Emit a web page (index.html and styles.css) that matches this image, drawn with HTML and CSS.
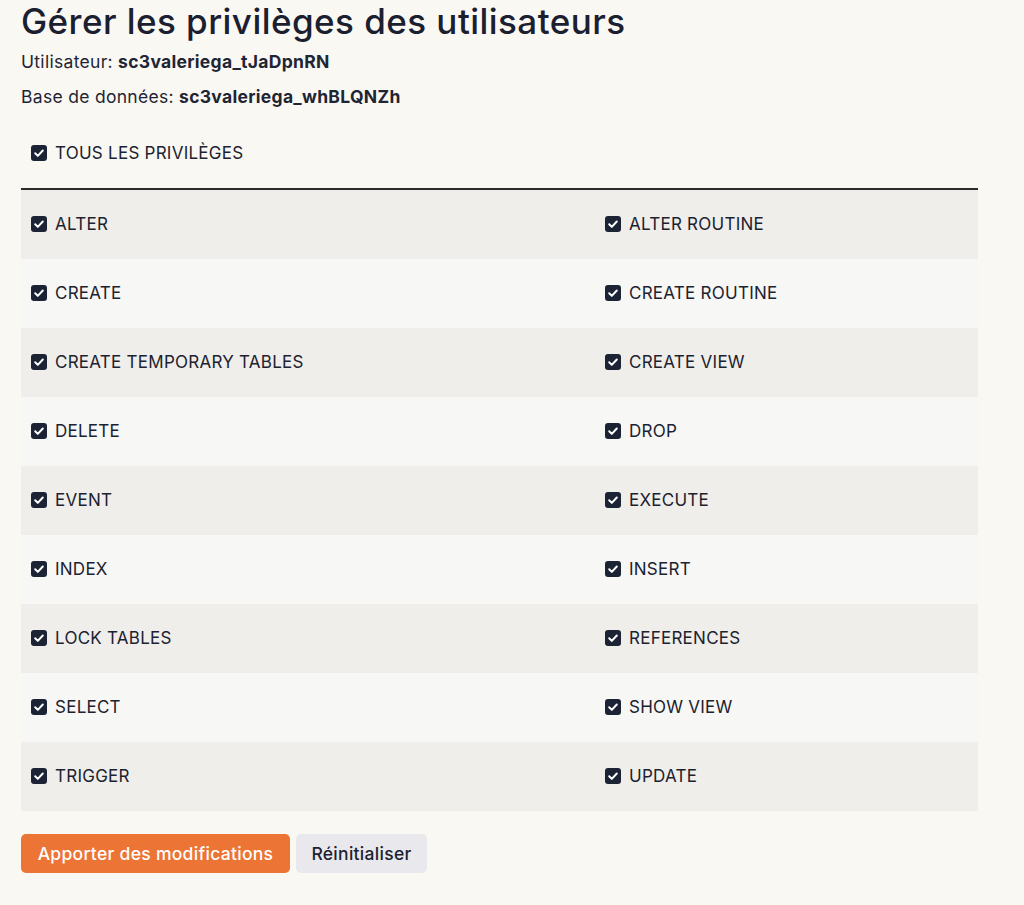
FILE: index.html
```html
<!DOCTYPE html>
<html lang="fr">
<head>
<meta charset="utf-8">
<title>Gérer les privilèges des utilisateurs</title>
<link rel="stylesheet" href="styles.css">
</head>
<body>
<main class="page">
  <h1 class="title">Gérer les privilèges des utilisateurs</h1>
  <p class="meta">Utilisateur: <strong>sc3valeriega_tJaDpnRN</strong></p>
  <p class="meta">Base de données: <strong>sc3valeriega_whBLQNZh</strong></p>

  <div class="all">
    <label class="check"><span class="box"><svg viewBox="0 0 16 16"><path d="M4.2 8.3l2.6 2.6 5-5.4"/></svg></span>TOUS LES PRIVILÈGES</label>
  </div>

  <div class="grid">
    <div class="row">
      <label class="cell check"><span class="box"><svg viewBox="0 0 16 16"><path d="M4.2 8.3l2.6 2.6 5-5.4"/></svg></span>ALTER</label>
      <label class="cell check"><span class="box"><svg viewBox="0 0 16 16"><path d="M4.2 8.3l2.6 2.6 5-5.4"/></svg></span>ALTER ROUTINE</label>
    </div>
    <div class="row">
      <label class="cell check"><span class="box"><svg viewBox="0 0 16 16"><path d="M4.2 8.3l2.6 2.6 5-5.4"/></svg></span>CREATE</label>
      <label class="cell check"><span class="box"><svg viewBox="0 0 16 16"><path d="M4.2 8.3l2.6 2.6 5-5.4"/></svg></span>CREATE ROUTINE</label>
    </div>
    <div class="row">
      <label class="cell check"><span class="box"><svg viewBox="0 0 16 16"><path d="M4.2 8.3l2.6 2.6 5-5.4"/></svg></span>CREATE TEMPORARY TABLES</label>
      <label class="cell check"><span class="box"><svg viewBox="0 0 16 16"><path d="M4.2 8.3l2.6 2.6 5-5.4"/></svg></span>CREATE VIEW</label>
    </div>
    <div class="row">
      <label class="cell check"><span class="box"><svg viewBox="0 0 16 16"><path d="M4.2 8.3l2.6 2.6 5-5.4"/></svg></span>DELETE</label>
      <label class="cell check"><span class="box"><svg viewBox="0 0 16 16"><path d="M4.2 8.3l2.6 2.6 5-5.4"/></svg></span>DROP</label>
    </div>
    <div class="row">
      <label class="cell check"><span class="box"><svg viewBox="0 0 16 16"><path d="M4.2 8.3l2.6 2.6 5-5.4"/></svg></span>EVENT</label>
      <label class="cell check"><span class="box"><svg viewBox="0 0 16 16"><path d="M4.2 8.3l2.6 2.6 5-5.4"/></svg></span>EXECUTE</label>
    </div>
    <div class="row">
      <label class="cell check"><span class="box"><svg viewBox="0 0 16 16"><path d="M4.2 8.3l2.6 2.6 5-5.4"/></svg></span>INDEX</label>
      <label class="cell check"><span class="box"><svg viewBox="0 0 16 16"><path d="M4.2 8.3l2.6 2.6 5-5.4"/></svg></span>INSERT</label>
    </div>
    <div class="row">
      <label class="cell check"><span class="box"><svg viewBox="0 0 16 16"><path d="M4.2 8.3l2.6 2.6 5-5.4"/></svg></span>LOCK TABLES</label>
      <label class="cell check"><span class="box"><svg viewBox="0 0 16 16"><path d="M4.2 8.3l2.6 2.6 5-5.4"/></svg></span>REFERENCES</label>
    </div>
    <div class="row">
      <label class="cell check"><span class="box"><svg viewBox="0 0 16 16"><path d="M4.2 8.3l2.6 2.6 5-5.4"/></svg></span>SELECT</label>
      <label class="cell check"><span class="box"><svg viewBox="0 0 16 16"><path d="M4.2 8.3l2.6 2.6 5-5.4"/></svg></span>SHOW VIEW</label>
    </div>
    <div class="row">
      <label class="cell check"><span class="box"><svg viewBox="0 0 16 16"><path d="M4.2 8.3l2.6 2.6 5-5.4"/></svg></span>TRIGGER</label>
      <label class="cell check"><span class="box"><svg viewBox="0 0 16 16"><path d="M4.2 8.3l2.6 2.6 5-5.4"/></svg></span>UPDATE</label>
    </div>
  </div>

  <div class="actions">
    <button class="btn btn-primary" type="button">Apporter des modifications</button>
    <button class="btn btn-secondary" type="button">Réinitialiser</button>
  </div>
</main>
</body>
</html>
```

FILE: styles.css
```css
* { box-sizing: border-box; }

html, body {
  margin: 0;
  padding: 0;
  background: #faf8f3;
}

body {
  font-family: Inter, "Open Sans", "Liberation Sans", sans-serif;
  color: #1c2230;
}

.page {
  padding: 0 46px 0 21px;
  width: 1024px;
}

.title {
  margin: 0;
  padding-top: 0;
  font-size: 35px;
  line-height: 42px;
  font-weight: 500;
  letter-spacing: 0.45px;
  color: #1a2030;
}

.meta {
  margin: 0;
  font-size: 17.5px;
  line-height: 20px;
  letter-spacing: 0.3px;
  color: #1f2533;
}

.meta:first-of-type { margin-top: 10px; }
.meta + .meta { margin-top: 15px; }

.meta strong {
  font-weight: 700;
}

.all {
  margin-top: 36px;
  padding: 0 10px 25px;
  border-bottom: 2px solid #2b2b2d;
}

.check {
  display: flex;
  align-items: center;
  gap: 8px;
  font-size: 17px;
  line-height: 20px;
  color: #1c2230;
  letter-spacing: 0.25px;
}

.box {
  flex: none;
  width: 16px;
  height: 16px;
  border-radius: 3px;
  background: #1b2335;
  display: flex;
  align-items: center;
  justify-content: center;
}

.box svg {
  width: 16px;
  height: 16px;
  fill: none;
  stroke: #ffffff;
  stroke-width: 2;
  stroke-linecap: round;
  stroke-linejoin: round;
}

.grid {
  display: flex;
  flex-direction: column;
}

.row {
  display: grid;
  grid-template-columns: 574px 1fr;
  height: 69px;
  background: #f7f7f5;
}

.row:nth-child(odd) {
  background: #efeeea;
}

.cell {
  padding: 0 10px 1px;
}

.actions {
  display: flex;
  gap: 6px;
  margin-top: 23px;
}

.btn {
  font-family: inherit;
  font-size: 17.5px;
  letter-spacing: 0.3px;
  font-weight: 500;
  height: 39px;
  border: none;
  border-radius: 5px;
  padding: 0 10px;
  cursor: pointer;
}

.btn-primary {
  background: #ec7434;
  color: #ffffff;
  width: 269px;
}

.btn-secondary {
  background: #e9e9ed;
  color: #1c2230;
  width: 131px;
}
```
